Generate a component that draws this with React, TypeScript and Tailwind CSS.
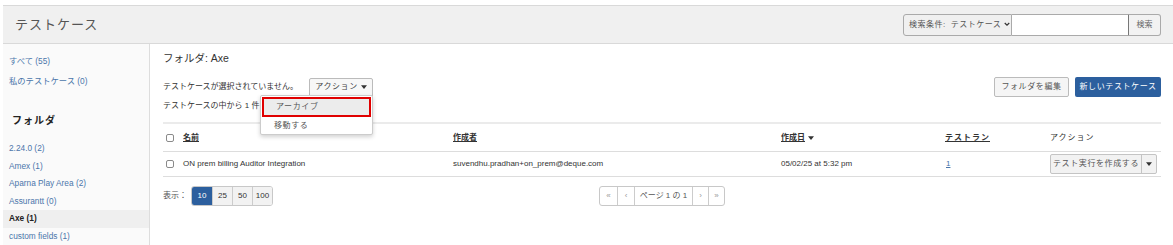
import React from 'react'

const folders = [
  { name: "2.24.0 (2)" },
  { name: "Amex (1)" },
  { name: "Aparna Play Area (2)" },
  { name: "Assurantt (0)" },
  { name: "Axe (1)", active: true },
  { name: "custom fields (1)" },
]

function Caret({ className = "" }: { className?: string }) {
  return (
    <svg viewBox="0 0 8 5" className={"w-[6px] h-[4px] " + className}>
      <path d="M0 0h8L4 5z" fill="currentColor" />
    </svg>
  )
}

function Box() {
  return <span className="block w-[8px] h-[8px] rounded-[2px] border border-[#8a8a8a] bg-white" />
}

export default function App() {
  return (
    <div className="w-[1173px] h-[245px] overflow-hidden bg-white pt-[5px] pl-[3px] text-[#333] font-['Liberation_Sans','Noto_Sans_CJK_JP',sans-serif]">
      {/* header */}
      <div className="h-[39px] bg-[#f0f0f0] border-t border-b border-[#d9d9d9] flex items-center justify-between pl-[12px] pr-[12px]">
        <h1 className="text-[13px] text-[#555] tracking-[1px]">テストケース</h1>
        <div className="flex h-[22px] text-[8px] text-[#555]">
          <div className="w-[109px] flex items-center gap-[2px] border border-[#aaa] rounded-l-[3px] bg-[#f0f0f0] pl-[5px]">
            <span className="tracking-[0.5px]">検索条件:</span>
            <span className="ml-[3px] tracking-[0.5px]">テストケース</span>
            <svg viewBox="0 0 8 6" className="w-[6px] h-[5px] ml-[1px]"><path d="M1 1l3 3 3-3" stroke="#333" strokeWidth="1.6" fill="none" /></svg>
          </div>
          <div className="w-[116px] bg-white border-y border-[#aaa]" />
          <button className="w-[33px] border border-[#aaa] border-l-[#777] rounded-r-[3px] bg-[#f2f2f2] text-[8px] text-[#666]">検索</button>
        </div>
      </div>

      <div className="flex h-[202px]">
        {/* sidebar */}
        <aside className="w-[147px] shrink-0 border-r border-[#ddd] bg-[#fafafa] text-[8.3px] text-[#4a76aa]">
          <div className="pt-[8px] pl-[6px]">
            <div className="h-[18px] leading-[18px]">すべて (55)</div>
            <div className="mt-[2px] h-[18px] leading-[18px]">私のテストケース (0)</div>
          </div>
          <div className="mt-[21px] pl-[9px] h-[20px] leading-[20px] text-[10px] font-bold text-[#222] tracking-[1px]">フォルダ</div>
          <div className="mt-[9px]">
            {folders.map((f, i) => (
              <div
                key={i}
                className={f.active
                  ? "h-[17.5px] leading-[17.5px] pl-[6px] bg-[#efefef] font-bold text-[#222]"
                  : "h-[17.5px] leading-[17.5px] pl-[6px]"}
              >
                {f.name}
              </div>
            ))}
          </div>
        </aside>

        {/* main */}
        <main className="flex-1 pl-[13px] pr-[12px]">
          <h2 className="mt-[4px] h-[20px] leading-[20px] text-[10.5px] text-[#333]">フォルダ: Axe</h2>

          <div className="mt-[9px] flex items-center justify-between h-[20px]">
            <div className="flex items-center text-[8px]">
              <span className="w-[146px]">テストケースが選択されていません。</span>
              <div className="relative">
                <button className="h-[19px] w-[64px] border border-[#bbb] rounded-[2px] bg-[#f7f7f7] flex items-center justify-center gap-[3px] text-[8px] text-[#444] tracking-[0.6px]">
                  アクション <Caret className="text-[#333]" />
                </button>
                <div className="absolute right-0 top-[17px] w-[113px] h-[40px] bg-white border border-[#ccc] rounded-[2px] shadow-[0_2px_4px_rgba(0,0,0,0.18)] z-10 text-[8px] text-[#555]">
                  <div className="mt-[1px] mx-[1px] h-[20px] border-2 border-[#e00000] bg-[#ececec] pl-[12px] leading-[16px] tracking-[0.6px]">アーカイブ</div>
                  <div className="h-[18px] leading-[18px] pl-[13px] tracking-[0.6px]">移動する</div>
                </div>
              </div>
            </div>
            <div className="flex items-center gap-[6px] text-[8px] tracking-[0.6px]">
              <button className="h-[20px] w-[75px] border border-[#bbb] rounded-[2px] bg-[#f5f5f5] text-[#555]">フォルダを編集</button>
              <button className="h-[20px] w-[86px] rounded-[2px] bg-[#2c5f9e] text-white">新しいテストケース</button>
            </div>
          </div>

          <div className="mt-[3px] h-[12px] leading-[12px] text-[8px]">テストケースの中から 1 件</div>

          {/* table */}
          <div className="mt-[10px] border-t-2 border-[#ebebeb] text-[8px]">
            <div className="grid grid-cols-[20px_270px_328px_164px_105px_1fr] items-center h-[28px] border-b border-[#ddd]">
              <div className="pl-[3px]"><Box /></div>
              <div className="font-bold underline">名前</div>
              <div className="font-bold underline">作成者</div>
              <div className="flex items-center gap-[3px]"><span className="font-bold underline">作成日</span><Caret className="text-[#333]" /></div>
              <div className="font-bold underline tracking-[1px]">テストラン</div>
              <div className="tracking-[1px]">アクション</div>
            </div>
            <div className="grid grid-cols-[20px_270px_328px_164px_105px_1fr] items-center h-[25px] border-b border-[#ddd]">
              <div className="pl-[3px]"><Box /></div>
              <div>ON prem billing Auditor Integration</div>
              <div>suvendhu.pradhan+on_prem@deque.com</div>
              <div>05/02/25 at 5:32 pm</div>
              <div className="text-[#4a76aa] underline pl-[1px]">1</div>
              <div className="flex h-[20px] w-[107px] border border-[#c4c4c4] rounded-[2px] bg-[#f2f2f2] text-[#555]">
                <span className="flex-1 flex items-center justify-center tracking-[0.6px] border-r border-[#c4c4c4]">テスト実行を作成する</span>
                <span className="w-[14px] flex items-center justify-center"><Caret className="text-[#333]" /></span>
              </div>
            </div>
          </div>

          {/* footer */}
          <div className="mt-[9px] grid grid-cols-[1fr_auto_1fr] items-center h-[20px] text-[8px]">
            <div className="flex items-center">
              <span className="text-[#555] w-[28px]">表示：</span>
              <div className="flex h-[20px] border border-[#c8c8c8] rounded-[3px] overflow-hidden">
                <span className="w-[20px] flex items-center justify-center bg-[#2c5f9e] text-white">10</span>
                <span className="w-[20px] flex items-center justify-center bg-[#f2f2f2] border-l border-[#ccc]">25</span>
                <span className="w-[20px] flex items-center justify-center bg-[#f2f2f2] border-l border-[#ccc]">50</span>
                <span className="w-[20px] flex items-center justify-center bg-[#f2f2f2] border-l border-[#ccc]">100</span>
              </div>
            </div>
            <div className="flex h-[20px] border border-[#c8c8c8] rounded-[3px] text-[#999]">
              <span className="w-[17px] flex items-center justify-center">«</span>
              <span className="w-[17px] flex items-center justify-center border-l border-[#ccc]">‹</span>
              <span className="w-[58px] flex items-center justify-center border-l border-[#ccc] text-[#555]">ページ 1 の 1</span>
              <span className="w-[16px] flex items-center justify-center border-l border-[#ccc]">›</span>
              <span className="w-[16px] flex items-center justify-center border-l border-[#ccc]">»</span>
            </div>
            <div />
          </div>
        </main>
      </div>
    </div>
  )
}
